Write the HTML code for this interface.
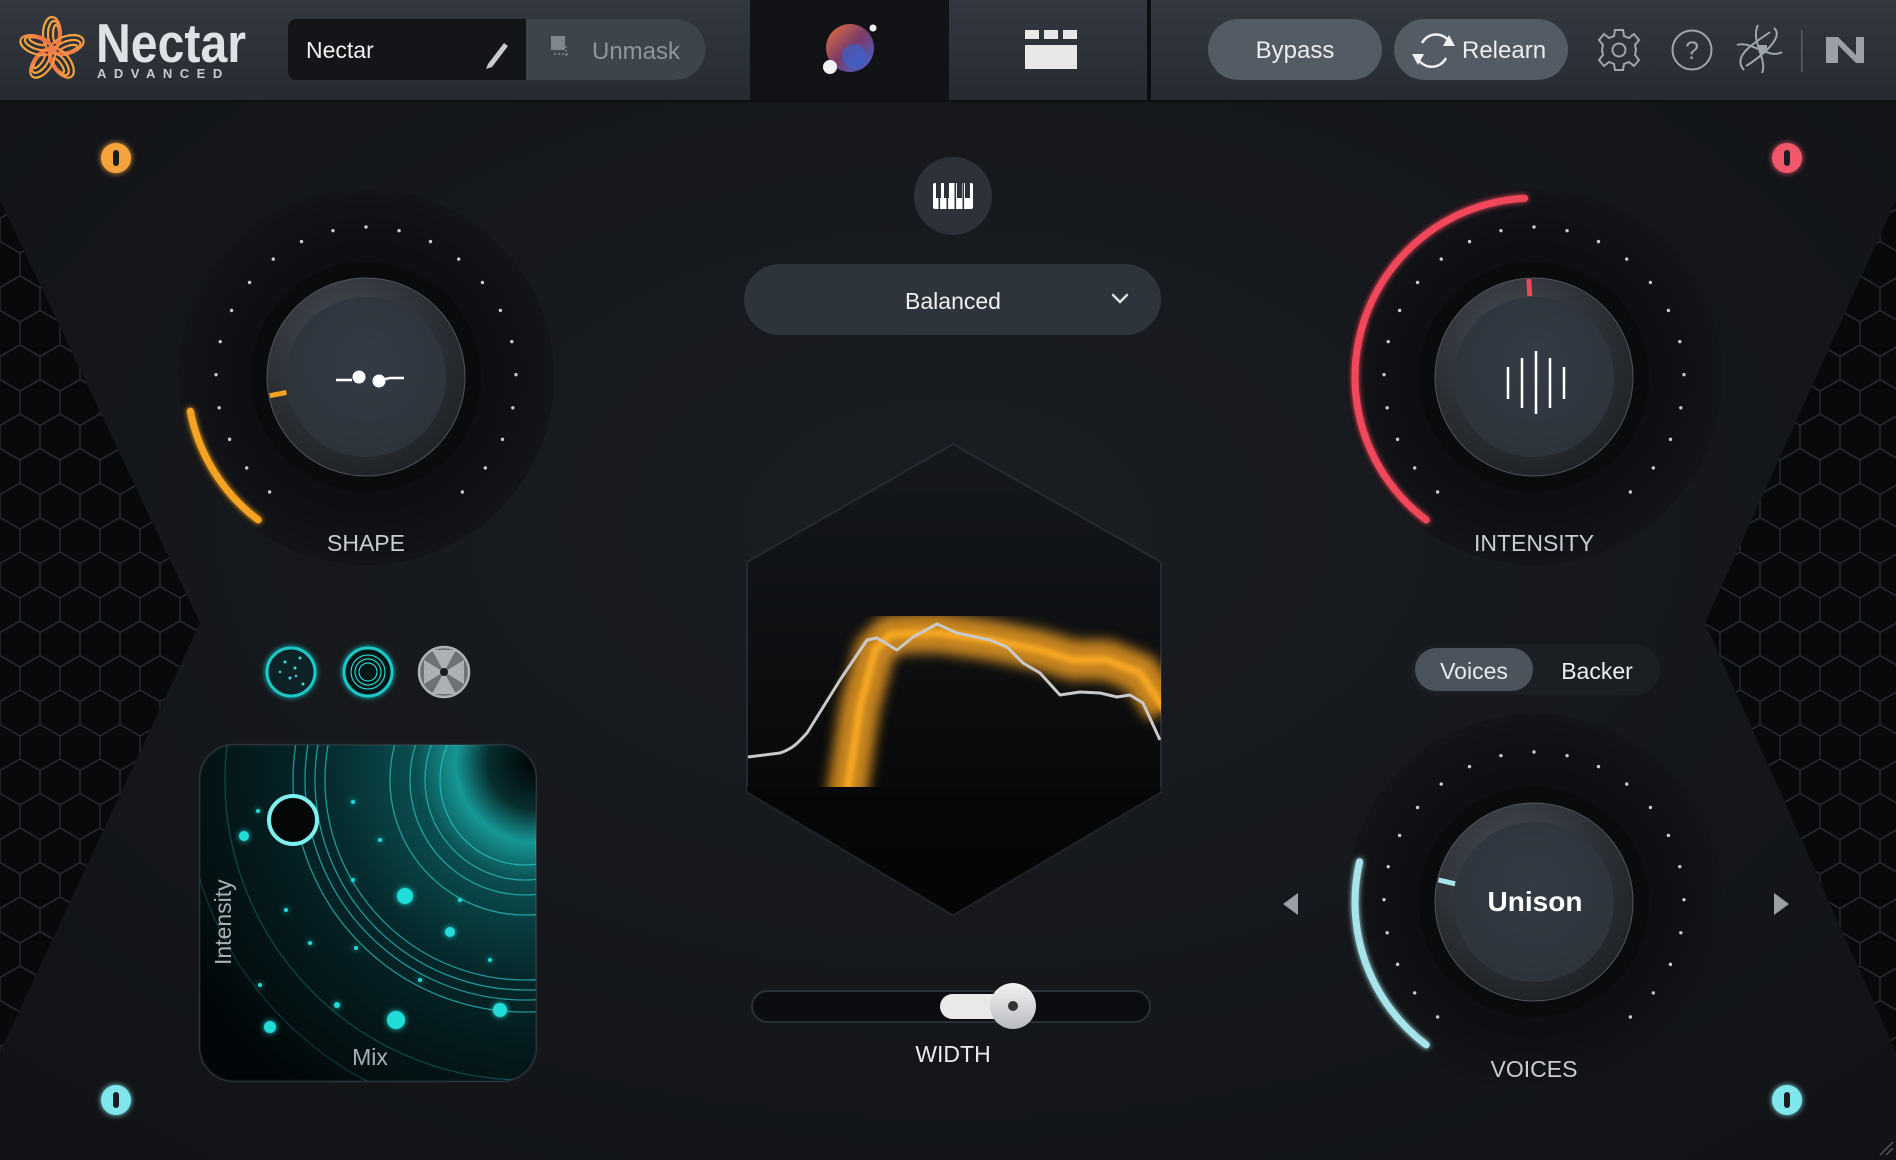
<!DOCTYPE html>
<html><head><meta charset="utf-8">
<style>
html,body{margin:0;padding:0;background:#131519;width:1896px;height:1160px;overflow:hidden}
svg{display:block}
text{font-family:"Liberation Sans",sans-serif}
</style></head>
<body>
<svg id="s" width="1896" height="1160" viewBox="0 0 1896 1160" xmlns="http://www.w3.org/2000/svg">
<defs>
<linearGradient id="hdr" x1="0" y1="0" x2="0" y2="1"><stop offset="0" stop-color="#333840"/><stop offset="1" stop-color="#272b31"/></linearGradient>
<radialGradient id="bg" cx="0.5" cy="0.45" r="0.7"><stop offset="0" stop-color="#1a1d22"/><stop offset="1" stop-color="#111316"/></radialGradient>
<pattern id="hex" width="40" height="69" patternUnits="userSpaceOnUse">
<path d="M20 0 L40 11.5 L40 34.5 L20 46 L0 34.5 L0 11.5 Z M20 46 L20 69" fill="none" stroke="#262b32" stroke-width="1.5"/>
</pattern>
<radialGradient id="knob" cx="0.4" cy="0.3" r="0.8"><stop offset="0" stop-color="#474c54"/><stop offset="0.6" stop-color="#2a2e33"/><stop offset="1" stop-color="#1c1f23"/></radialGradient>
<radialGradient id="face" cx="0.5" cy="0.4" r="0.6"><stop offset="0" stop-color="#343b44"/><stop offset="1" stop-color="#2e343c"/></radialGradient>
<radialGradient id="outer" cx="0.5" cy="0.5" r="0.5"><stop offset="0.7" stop-color="#0e0f12"/><stop offset="1" stop-color="#121418"/></radialGradient>
<linearGradient id="hexg" x1="0" y1="0" x2="0" y2="1"><stop offset="0" stop-color="#15181c"/><stop offset="1" stop-color="#020303"/></linearGradient>
<filter id="glow" x="-50%" y="-50%" width="200%" height="200%"><feGaussianBlur stdDeviation="3" result="b"/><feMerge><feMergeNode in="b"/><feMergeNode in="SourceGraphic"/></feMerge></filter>
<filter id="blur8"><feGaussianBlur stdDeviation="6"/></filter>
<filter id="blur3"><feGaussianBlur stdDeviation="2"/></filter>
<clipPath id="hexclip"><path d="M953 444 L1161 562 L1161 792 L953 915 L747 792 L747 562 Z"/></clipPath>
<clipPath id="chartclip"><rect x="747" y="440" width="414" height="347"/></clipPath>
<clipPath id="padclip"><rect x="200" y="745" width="336" height="336" rx="34"/></clipPath>
<radialGradient id="pad" cx="1" cy="0.05" r="1.2"><stop offset="0" stop-color="#000"/><stop offset="0.12" stop-color="#0a3a3c"/><stop offset="0.2" stop-color="#1cc7c4"/><stop offset="0.3" stop-color="#0d6466"/><stop offset="0.55" stop-color="#063034"/><stop offset="1" stop-color="#020607"/></radialGradient>
<linearGradient id="orb" x1="0" y1="0" x2="1" y2="1"><stop offset="0" stop-color="#e8733a"/><stop offset="0.5" stop-color="#7a3a6a"/><stop offset="1" stop-color="#3a6ad8"/></linearGradient>
<linearGradient id="logo" x1="0" y1="0" x2="1" y2="1"><stop offset="0" stop-color="#f7b23d"/><stop offset="1" stop-color="#ef6a4a"/></linearGradient>
<linearGradient id="thumb" x1="0" y1="0" x2="0" y2="1"><stop offset="0" stop-color="#f2f2f2"/><stop offset="1" stop-color="#b9bcc0"/></linearGradient>
</defs>

<rect x="0" y="0" width="1896" height="1160" fill="url(#bg)"/>
<path d="M0 200 L200 623 L0 1052 Z" fill="#08090b"/>
<path d="M0 200 L200 623 L0 1052 Z" fill="url(#hex)"/>
<path d="M1896 200 L1705 623 L1896 1052 Z" fill="#08090b"/>
<path d="M1896 200 L1705 623 L1896 1052 Z" fill="url(#hex)"/>

<rect x="0" y="0" width="1896" height="100" fill="url(#hdr)"/>
<rect x="750" y="0" width="199" height="100" fill="#111316"/>
<rect x="1147" y="0" width="4" height="100" fill="#0c0d10"/>
<rect x="0" y="100" width="1896" height="2" fill="#0e1013"/>

<g transform="translate(52,50)" fill="none" stroke="url(#logo)" stroke-width="2.2">
<g id="pet"><ellipse cx="0" cy="-16" rx="9" ry="17"/><ellipse cx="2" cy="-16" rx="6" ry="13"/><ellipse cx="4" cy="-16" rx="3" ry="9"/></g>
<use href="#pet" transform="rotate(72)"/><use href="#pet" transform="rotate(144)"/><use href="#pet" transform="rotate(216)"/><use href="#pet" transform="rotate(288)"/>
</g>
<text x="96" y="62" font-size="55" font-weight="bold" fill="#dfe1e4" textLength="150" lengthAdjust="spacingAndGlyphs">Nectar</text>
<text x="97" y="78" font-size="13" font-weight="bold" fill="#c8cbd0" letter-spacing="7.5">ADVANCED</text>

<path d="M296 19 H526 V80 H296 a8 8 0 0 1 -8 -8 V27 a8 8 0 0 1 8 -8Z" fill="#131519"/>
<text x="306" y="58" font-size="23" fill="#f0f0f0">Nectar</text>
<path d="M488 64 L504 43 L508 46 L492 67 L486 69 Z" fill="#c8cbd0"/>
<path d="M526 19 H675 a30.5 30.5 0 0 1 0 61 H526 Z" fill="#3e444c"/>
<rect x="551" y="36" width="14" height="14" fill="#80868e"/><path d="M554 54 h16 M566 46 v12" stroke="#80868e" stroke-width="1.5" stroke-dasharray="2 2"/>
<text x="592" y="59" font-size="24" fill="#8f959d">Unmask</text>

<circle cx="850" cy="48" r="24" fill="url(#orb)"/>
<circle cx="854" cy="56" r="12" fill="#3a63d0" opacity="0.7"/>
<circle cx="830" cy="67" r="7" fill="#f2f2f2"/>
<circle cx="873" cy="28" r="3.5" fill="#f2f2f2"/>

<rect x="1025" y="30" width="14" height="9" fill="#e8e8e8"/><rect x="1044" y="30" width="14" height="9" fill="#e8e8e8"/><rect x="1063" y="30" width="14" height="9" fill="#e8e8e8"/>
<rect x="1025" y="45" width="52" height="24" fill="#e8e8e8"/>

<rect x="1208" y="19" width="174" height="61" rx="30.5" fill="#535b64"/>
<text x="1295" y="58" font-size="24" fill="#ececec" text-anchor="middle">Bypass</text>
<rect x="1394" y="19" width="174" height="61" rx="30.5" fill="#535b64"/>
<path d="M1422 43 A16 16 0 0 1 1449 41" fill="none" stroke="#f0f0f0" stroke-width="2.5"/>
<path d="M1446 58 A16 16 0 0 1 1418 59" fill="none" stroke="#f0f0f0" stroke-width="2.5"/>
<path d="M1449 35 L1455 46 L1443 46 Z" fill="#f0f0f0"/>
<path d="M1418 65 L1412 54 L1424 54 Z" fill="#f0f0f0"/>
<text x="1462" y="58" font-size="24" fill="#ececec">Relearn</text>

<g transform="translate(1619,50)" fill="none" stroke="#a0a6ae" stroke-width="2">
<path d="M-4 -20 L4 -20 L5 -14 L10 -12 L15 -16 L20 -10 L16 -5 L17 0 L16 5 L20 10 L15 16 L10 12 L5 14 L4 20 L-4 20 L-5 14 L-10 12 L-15 16 L-20 10 L-16 5 L-17 0 L-16 -5 L-20 -10 L-15 -16 L-10 -12 L-5 -14 Z"/>
<circle r="6.5"/>
</g>
<circle cx="1692" cy="50" r="19.5" fill="none" stroke="#a0a6ae" stroke-width="2"/>
<text x="1692" y="59" font-size="25" fill="#a0a6ae" text-anchor="middle">?</text>
<g fill="none" stroke="#a0a6ae" stroke-width="2">
<path d="M1744 70 C1730 55 1760 40 1770 32 M1774 28 C1786 38 1756 60 1746 66"/>
<path d="M1737 45 C1750 40 1770 60 1782 52"/>
<path d="M1758 25 C1750 40 1768 60 1762 73"/>
</g>
<rect x="1759" y="45" width="8" height="8" fill="#a0a6ae"/>
<rect x="1801" y="30" width="1.5" height="42" fill="#5a6068"/>
<path d="M1826 63 V37 H1838 L1856 55 V37 H1864 V63 H1856 L1838 45 V63 Z" fill="#9ba0a7"/>

<g filter="url(#glow)">
<circle cx="116" cy="158" r="15" fill="#f5a43e"/>
<circle cx="1787" cy="158" r="15" fill="#f2576a"/>
<circle cx="116" cy="1100" r="15" fill="#7fe6ee"/>
<circle cx="1787" cy="1100" r="15" fill="#7fe6ee"/>
</g>
<g fill="#1a1c20"><rect x="113" y="150" width="6" height="16" rx="3"/><rect x="1784" y="150" width="6" height="16" rx="3"/><rect x="113" y="1092" width="6" height="16" rx="3"/><rect x="1784" y="1092" width="6" height="16" rx="3"/></g>

<g id="knobs"></g>

<g stroke="#fff" stroke-width="2.5" fill="#fff">
<path d="M336 380 H352 M377 381 L390 378 H404" fill="none"/>
<circle cx="359" cy="377" r="6.5" stroke="none"/><circle cx="379" cy="381" r="6.5" stroke="none"/>
</g>
<g stroke="#fff" stroke-width="2.5">
<path d="M1508 367 V399 M1522 358 V408 M1536 351 V414 M1550 358 V408 M1564 367 V399"/>
</g>
<text x="1535" y="911" font-size="28" font-weight="bold" fill="#fff" text-anchor="middle">Unison</text>

<text x="366" y="551" font-size="23" fill="#c8ccd3" text-anchor="middle">SHAPE</text>
<text x="1534" y="551" font-size="23" fill="#c8ccd3" text-anchor="middle">INTENSITY</text>
<text x="1534" y="1077" font-size="23" fill="#c8ccd3" text-anchor="middle">VOICES</text>
<text x="953" y="1062" font-size="23" fill="#e8eaed" text-anchor="middle">WIDTH</text>

<circle cx="953" cy="196" r="39" fill="#2d323a"/>
<rect x="933" y="183" width="40" height="26" rx="2" fill="#fff"/>
<g fill="#2d323a"><rect x="938.5" y="183" width="1.6" height="26"/><rect x="946.5" y="183" width="1.6" height="26"/><rect x="954.5" y="183" width="1.6" height="26"/><rect x="962.5" y="183" width="1.6" height="26"/></g>
<g fill="#2d323a"><rect x="936" y="183" width="5" height="15"/><rect x="944" y="183" width="5" height="15"/><rect x="957" y="183" width="5" height="15"/><rect x="965" y="183" width="5" height="15"/></g>

<rect x="744" y="264" width="417" height="71" rx="35.5" fill="#2e343c"/>
<text x="953" y="309" font-size="23" fill="#f0f0f0" text-anchor="middle">Balanced</text>
<path d="M1113 295 L1120 302 L1127 295" fill="none" stroke="#e0e0e0" stroke-width="2.5" stroke-linecap="round"/>

<path d="M953 444 L1161 562 L1161 792 L953 915 L747 792 L747 562 Z" fill="url(#hexg)" stroke="#262b33" stroke-width="2" stroke-linejoin="round"/>
<g clip-path="url(#hexclip)">
<rect x="747" y="787" width="414" height="130" fill="#050607" opacity="0.6"/>
<g clip-path="url(#chartclip)">
<path d="M846 800 L860 707 L875 650 L890 635 L913 633 L940 633 L990 640 L1040 650 L1073 660 L1107 660 L1140 673 L1165 710" fill="none" stroke="#e89a22" stroke-width="40" stroke-linejoin="round" filter="url(#blur8)" opacity="0.85"/>
<path d="M846 800 L860 707 L875 650 L890 635 L913 633 L940 633 L990 640 L1040 650 L1073 660 L1107 660 L1140 673 L1165 710" fill="none" stroke="#f5a623" stroke-width="8" filter="url(#blur3)"/>
</g>
<path d="M748 757 L780 753 C795 748 800 740 807 733 L840 680 L867 640 L877 638 L897 650 L913 637 L937 624 L957 633 L990 640 L1007 647 L1023 663 L1040 673 L1060 695 L1080 692 L1100 693 L1117 697 L1130 695 L1143 703 L1160 740" fill="none" stroke="#c9c9c9" stroke-width="3" stroke-linejoin="round"/>
</g>

<rect x="752" y="991" width="398" height="31" rx="15.5" fill="#0b0c0f" stroke="#2a2f36" stroke-width="2"/>
<rect x="940" y="994" width="80" height="25" rx="12.5" fill="#e9e9e9"/>
<circle cx="1013" cy="1006" r="23" fill="url(#thumb)"/>
<circle cx="1013" cy="1006" r="5" fill="#333"/>

<g filter="url(#glow)">
<circle cx="291" cy="672" r="24" fill="#072426" stroke="#1fc9c9" stroke-width="3"/>
<circle cx="368" cy="672" r="24" fill="#041618" stroke="#1fc9c9" stroke-width="3"/>
</g>
<g fill="#3fe0dc"><circle cx="285" cy="662" r="1.5"/><circle cx="295" cy="668" r="1.5"/><circle cx="300" cy="658" r="1.5"/><circle cx="290" cy="678" r="1.5"/><circle cx="303" cy="684" r="1.5"/><circle cx="280" cy="672" r="1.2"/><circle cx="296" cy="676" r="1.2"/></g>
<g fill="none" stroke="#2fd0cc" stroke-width="1.2"><circle cx="368" cy="672" r="17"/><circle cx="368" cy="672" r="13"/><circle cx="368" cy="672" r="9"/></g>
<circle cx="444" cy="672" r="25" fill="#6d7176" stroke="#aeb2b6" stroke-width="2.5"/>
<path d="M444 672 L424 660 L424 684 Z M444 672 L464 660 L464 684 Z M444 672 L432 650 L456 650 Z M444 672 L432 694 L456 694Z" fill="#d8dadd" opacity="0.6"/>
<circle cx="444" cy="672" r="4" fill="#1a1a1a"/>

<rect x="200" y="745" width="336" height="336" rx="34" fill="#030809" stroke="#2c3238" stroke-width="2.5"/>
<g clip-path="url(#padclip)">
<rect x="200" y="745" width="336" height="336" fill="url(#pad)" opacity="0.75"/>
<g fill="none" stroke="#29c9c6" stroke-width="1.3" opacity="0.7">
<circle cx="525" cy="780" r="85"/><circle cx="525" cy="780" r="100"/><circle cx="525" cy="780" r="115"/><circle cx="525" cy="780" r="135"/>
<circle cx="525" cy="780" r="200"/><circle cx="525" cy="780" r="210"/><circle cx="525" cy="780" r="220"/><circle cx="525" cy="780" r="232"/>
<circle cx="525" cy="780" r="300" opacity="0.4"/><circle cx="525" cy="780" r="340" opacity="0.3"/>
</g>
<g fill="#21dcd8" filter="url(#glow)">
<circle cx="244" cy="836" r="5"/><circle cx="405" cy="896" r="8"/><circle cx="450" cy="932" r="5"/><circle cx="396" cy="1020" r="9"/><circle cx="500" cy="1010" r="7"/><circle cx="270" cy="1027" r="6"/><circle cx="337" cy="1005" r="3"/>
<circle cx="258" cy="811" r="2"/><circle cx="286" cy="910" r="2"/><circle cx="310" cy="943" r="2"/><circle cx="260" cy="985" r="2"/><circle cx="353" cy="880" r="2"/><circle cx="353" cy="802" r="2"/><circle cx="380" cy="840" r="2"/><circle cx="356" cy="948" r="2"/><circle cx="490" cy="960" r="2"/><circle cx="420" cy="980" r="2"/><circle cx="460" cy="900" r="2"/>
</g>
</g>
<circle cx="293" cy="820" r="24" fill="#050708" stroke="#7df0ef" stroke-width="4"/>
<text x="0" y="0" font-size="23" fill="#aab0b6" transform="translate(231,965) rotate(-90)">Intensity</text>
<text x="370" y="1065" font-size="23" fill="#aab0b6" text-anchor="middle">Mix</text>

<rect x="1411" y="644" width="249" height="51" rx="25.5" fill="#1b1f24"/>
<rect x="1415" y="648" width="118" height="43" rx="21.5" fill="#4b535c"/>
<text x="1474" y="679" font-size="23" fill="#e8eaed" text-anchor="middle">Voices</text>
<text x="1597" y="679" font-size="23" fill="#eceef0" text-anchor="middle">Backer</text>

<path d="M1298 893 L1283 904 L1298 915 Z" fill="#9aa0a8"/>
<path d="M1774 893 L1789 904 L1774 915 Z" fill="#9aa0a8"/>

<path d="M1880 1155 L1893 1142 M1886 1155 L1893 1148" stroke="#555" stroke-width="1.5"/>
</svg>
<script>
(function(){
var NS="http://www.w3.org/2000/svg",g=document.getElementById("knobs");
function el(t,a){var e=document.createElementNS(NS,t);for(var k in a)e.setAttribute(k,a[k]);g.appendChild(e);return e;}
function pt(cx,cy,r,a){a=a*Math.PI/180;return [cx+r*Math.sin(a),cy-r*Math.cos(a)];}
function knob(cx,cy,from,to,col){
 el("circle",{cx:cx,cy:cy,r:188,fill:"url(#outer)"});
 for(var i=-11;i<=11;i++){var p=pt(cx,cy,150,i*12.73);el("circle",{cx:p[0],cy:p[1],r:1.7,fill:"#c8ccd2"});}
 el("circle",{cx:cx,cy:cy,r:115,fill:"#0a0b0d"});
 el("circle",{cx:cx,cy:cy,r:99,fill:"url(#knob)",stroke:"#50565e","stroke-width":1});
 el("circle",{cx:cx,cy:cy,r:80,fill:"url(#face)"});
 var s=pt(cx,cy,179,from),e=pt(cx,cy,179,to),la=(to-from)>180?1:0;
 el("path",{d:"M"+s[0]+" "+s[1]+" A179 179 0 "+la+" 1 "+e[0]+" "+e[1],fill:"none",stroke:col,"stroke-width":7,"stroke-linecap":"round",filter:"url(#glow)"});
 var a=pt(cx,cy,81,to),b=pt(cx,cy,98,to);
 el("line",{x1:a[0],y1:a[1],x2:b[0],y2:b[1],stroke:col,"stroke-width":5});
}
knob(366,377,-143,-101,"#f5a321");
knob(1534,377,-143,-3,"#f0475a");
knob(1534,902,-143,-77,"#a6e4ea");
})();
</script>
</body></html>
